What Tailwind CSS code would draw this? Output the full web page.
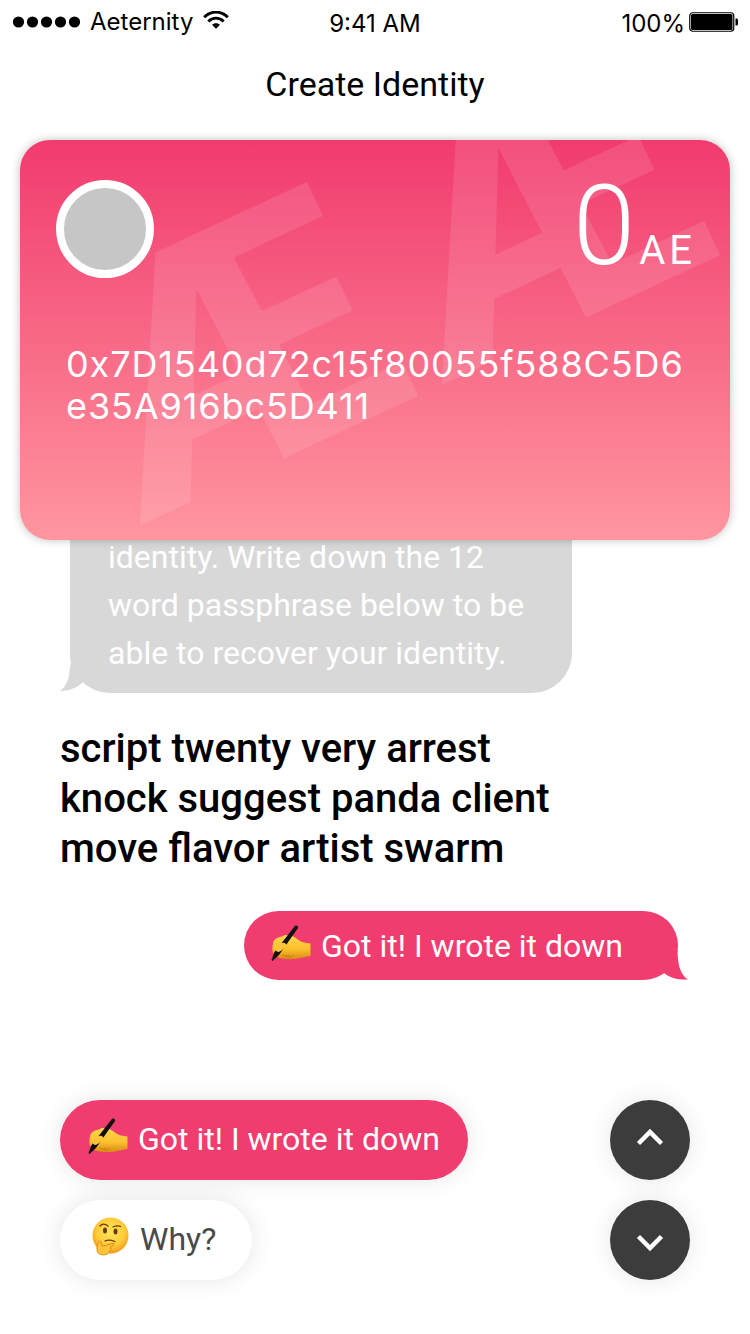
<!DOCTYPE html>
<html lang="en">
<head>
<meta charset="utf-8">
<meta name="viewport" content="width=device-width, initial-scale=1">
<title>Create Identity</title>
<script src="https://cdn.jsdelivr.net/npm/@tailwindcss/browser@4"></script>
</head>
<body class="bg-white text-black font-['Roboto',sans-serif]">
<svg class="absolute size-0" aria-hidden="true">
  <defs>
    <linearGradient id="skin" x1="0" y1="0" x2="0" y2="1"><stop offset="0" stop-color="#ffd84a"/><stop offset=".6" stop-color="#fcbf2e"/><stop offset="1" stop-color="#d98a12"/></linearGradient>
    <radialGradient id="face" cx=".5" cy=".4" r=".6"><stop offset="0" stop-color="#ffe45c"/><stop offset=".65" stop-color="#ffcb38"/><stop offset="1" stop-color="#f39a1c"/></radialGradient>
    <symbol id="writing" viewBox="0 0 40 40">
      <path d="M2 19C3 15 7 13 11 12.500C14 10 17 11 20 11.500C25 13 29 18 33 18.500L39.500 19.500V32C35 32.500 33 33.500 29 34C22 36 14 35 9 34C6 33 5 32 5 30L2 29C1 26 1.500 22 2 19Z" fill="url(#skin)"/>
      <path d="M12 31C14 32.500 16 32.500 18 31M17 33C19 33.500 21 32.500 22 31" fill="none" stroke="#c97a10" stroke-width="1" stroke-linecap="round"/>
      <path d="M23.500 2.500C24.500 .5 28 2 27 4L8 31L1.500 37L.5 36L3.500 28Z" fill="#111"/>
      <path d="M5 22C8 19 13 17.500 15 20C17 22 12 26 7.500 28C4.500 27.500 4 25 5 22Z" fill="#fcc436"/>
    </symbol>
    <symbol id="thinking" viewBox="0 0 40 40">
      <circle cx="20.500" cy="18.500" r="18" fill="url(#face)"/>
      <ellipse cx="15" cy="13.500" rx="2" ry="2.900" fill="#6b3c08"/>
      <ellipse cx="25.500" cy="14.500" rx="2" ry="2.900" fill="#6b3c08"/>
      <path d="M10 9C12 6.500 15 6.500 18 9M23 10C25 9 28 8.500 30.500 9.500M15 24C18 22.500 21 23 25 24.500" fill="none" stroke="#6b3c08" stroke-width="1.300" stroke-linecap="round"/>
      <path d="M10 23.500C11.500 24.500 11 27.500 12 29C15 29.500 20 26 24 26.500C25 27.500 23 29 20 30C22 31.500 20 36.500 16 37.500C11 38.500 7 37 7 32.500C7 28.500 8 24.500 10 23.500Z" fill="#ffc53a" stroke="#e08a16" stroke-width="1"/>
    </symbol>
  </defs>
</svg>

<div class="flex min-h-screen flex-col overflow-hidden">
  <header class="flex flex-col">
    <div class="grid h-10 grid-cols-3 items-center pl-3 pr-3 pt-1.5 font-['Inter',sans-serif] text-[24px] leading-8">
      <div class="flex items-center gap-2.5 pb-1">
        <svg class="h-3 w-[68px]" viewBox="0 0 68 12" aria-label="Signal strength"><circle cx="6.500" cy="6" r="5.600"/><circle cx="20.500" cy="6" r="5.600"/><circle cx="34.500" cy="6" r="5.600"/><circle cx="48.500" cy="6" r="5.600"/><circle cx="62.500" cy="6" r="5.600"/></svg>
        <span>Aeternity</span>
        <svg class="mb-1 h-[18px] w-[26px]" viewBox="0 0 26 18" fill="none" stroke="#000" stroke-width="2.800" aria-label="Wi-Fi"><path d="M1.200 6.200C8 -.6 18 -.6 24.800 6.200"/><path d="M5.300 10.400C9.500 6.100 16.500 6.100 20.700 10.400"/><path d="M13 17.800L9 13.700C11 11.600 15 11.600 17 13.700Z" fill="#000" stroke="none"/></svg>
      </div>
      <time class="text-center">9:41 AM</time>
      <div class="flex items-center justify-end gap-1">
        <span>100%</span>
        <svg class="mb-1 h-5 w-[49px]" viewBox="0 0 49 20" aria-label="Battery full"><rect x=".75" y=".75" width="44" height="18.500" rx="3" fill="none" stroke="#000" stroke-width="1.200"/><rect x="2" y="2" width="41.500" height="16" rx="1.500"/><path d="M46.500 6.500H47.500Q49 6.500 49 8V12Q49 13.500 47.500 13.500H46.500Z"/></svg>
      </div>
    </div>
    <h1 class="pt-6 pb-9 text-center text-[34px] leading-10">Create Identity</h1>
  </header>

  <section class="relative z-10 mx-5 flex h-[400px] flex-col overflow-hidden rounded-[30px] bg-linear-to-b/srgb from-[#f13b6e] to-[#ff969f] text-white shadow-[0_0_10px_rgba(0,0,0,0.25)]" aria-label="Identity card">
    <svg class="absolute inset-0 h-full w-full" aria-hidden="true"><text transform="translate(119 386) rotate(-25)" font-family="Roboto" font-weight="700" font-size="339" fill="#fff" fill-opacity=".11">Æ<tspan dx="15">Æ</tspan></text></svg>
    <div class="relative flex items-start justify-between pt-10 pr-[34px] pl-9">
      <div class="size-[98px] rounded-full border-8 border-white bg-[#c6c6c6]"></div>
      <p class="flex items-baseline gap-1 leading-[92px]"><span class="text-[112px] font-light">0</span><span class="text-[40px] tracking-widest">AE</span></p>
    </div>
    <p class="relative mt-[46px] pr-9 pl-[46px] font-['Inter',sans-serif] text-[36px] tracking-wide leading-[42px] break-all">0x7D1540d72c15f80055f588C5D6<br>e35A916bc5D411</p>
  </section>

  <main class="flex grow flex-col px-[60px] text-[32px]">
    <div class="relative -mt-10 ml-2.5 w-[502px] rounded-b-[40px] bg-[#d8d8d8] pt-[33px] pr-8 pb-4 pl-[38px] leading-[48px] text-white">
      <svg class="absolute bottom-0 -left-2.5 h-[42px] w-[52px]" viewBox="0 0 52 42" fill="#d8d8d8" aria-hidden="true"><path d="M10 0L11 12C9 18 11 32 0 40C9 40 17 37 23 31L50 30V0Z"/></svg>
      <p class="relative">identity. Write down the 12 word passphrase below to be able to recover your identity.</p>
    </div>
    <p class="mt-[31px] w-[520px] text-[40px] font-medium leading-[50px]">script twenty very arrest knock suggest panda client move flavor artist swarm</p>
    <div class="relative mt-[37px] mr-3 flex h-[69px] items-center gap-2.5 self-end rounded-full bg-[#f13c6f] pr-[55px] pl-[27px] text-white">
      <svg class="absolute -right-2.5 bottom-0 h-[30px] w-[40px]" viewBox="0 0 40 30" fill="#f13c6f" aria-hidden="true"><path d="M5 -5L29.800 -5L29.500 2C30 12 31 24 40 29.500C30 30 22 28 16 23L5 20Z"/></svg>
      <svg class="relative mb-1 size-10" aria-hidden="true"><use href="#writing"/></svg>
      <span class="relative">Got it! I wrote it down</span>
    </div>

    <div class="mt-auto flex items-start justify-between pt-8 pb-[54px]">
      <div class="flex flex-col items-start gap-5">
        <button type="button" class="flex h-20 items-center gap-2.5 rounded-full bg-[#f13c6f] px-7 pb-0.5 text-white shadow-[0_0_24px_rgba(0,0,0,0.1)]"><svg class="mb-1 size-10" aria-hidden="true"><use href="#writing"/></svg>Got it! I wrote it down</button>
        <button type="button" class="flex h-20 items-center gap-2.5 rounded-full bg-white pr-9 pb-0.5 pl-[30px] text-[#4a4a4a] shadow-[0_0_24px_rgba(0,0,0,0.1)]"><svg class="mb-1 size-10" aria-hidden="true"><use href="#thinking"/></svg>Why?</button>
      </div>
      <div class="flex flex-col gap-5">
        <button type="button" aria-label="Scroll up" class="flex size-20 items-center justify-center rounded-full bg-[#3c3c3c] shadow-[0_0_24px_rgba(0,0,0,0.1)]"><svg class="size-10" viewBox="0 0 40 40" fill="none" stroke="#fff" stroke-width="4.500" aria-hidden="true"><path d="M8.500 23.500L20 12L31.500 23.500"/></svg></button>
        <button type="button" aria-label="Scroll down" class="flex size-20 items-center justify-center rounded-full bg-[#3c3c3c] shadow-[0_0_24px_rgba(0,0,0,0.1)]"><svg class="size-10" viewBox="0 0 40 40" fill="none" stroke="#fff" stroke-width="4.500" aria-hidden="true"><path d="M8.500 16.500L20 28L31.500 16.500"/></svg></button>
      </div>
    </div>
  </main>
</div>
</body>
</html>
